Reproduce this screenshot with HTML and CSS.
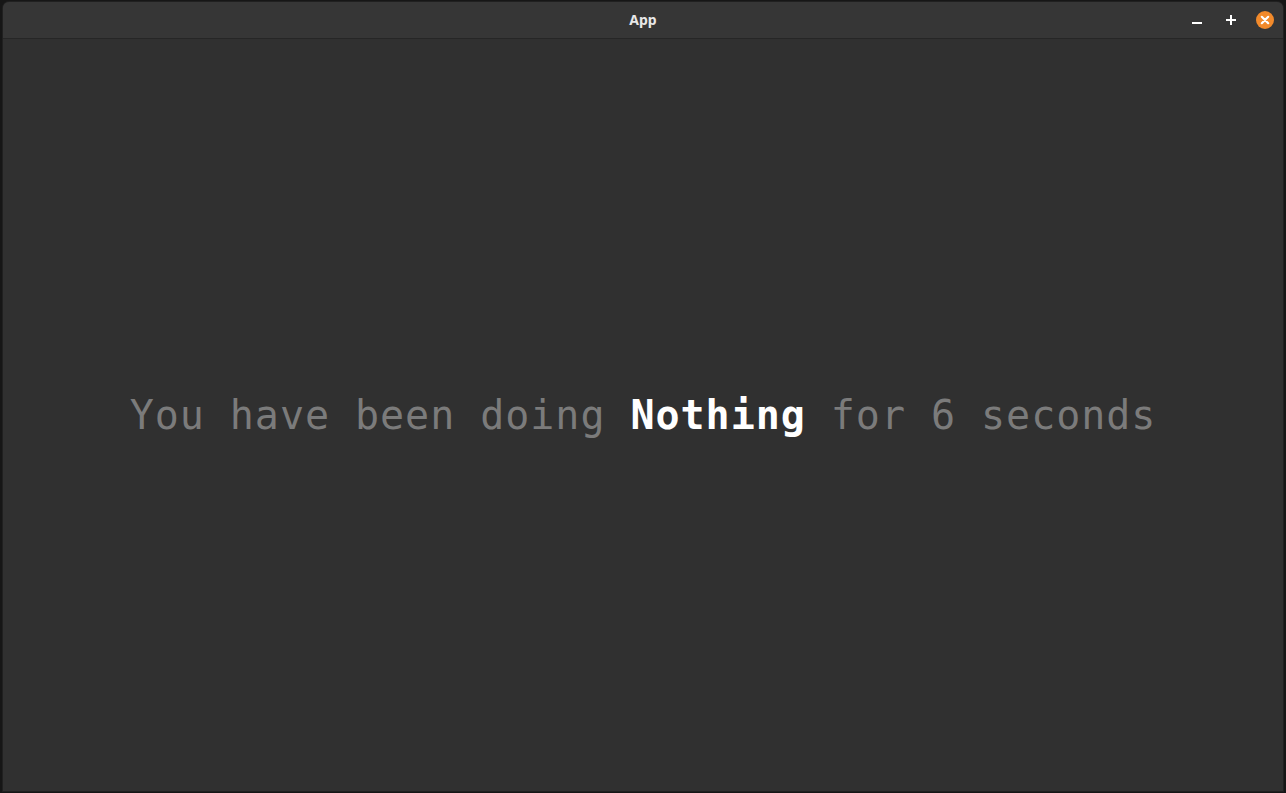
FILE: index.html
```html
<!DOCTYPE html>
<html>
<head>
<meta charset="utf-8">
<title>App</title>
<link rel="stylesheet" href="styles.css">
</head>
<body>
<div class="desktop">
  <div class="window">
    <header class="titlebar">
      <div class="title">App</div>
      <div class="controls">
        <span class="btn">
          <svg width="12" height="12" viewBox="0 0 12 12"><rect x="1" y="8" width="10" height="2" fill="#ffffff"/></svg>
        </span>
        <span class="btn">
          <svg width="12" height="12" viewBox="0 0 12 12"><rect x="1" y="5" width="10" height="2" fill="#ffffff"/><rect x="5" y="1" width="2" height="10" fill="#ffffff"/></svg>
        </span>
        <span class="btn close">
          <svg width="18" height="18" viewBox="0 0 18 18"><circle cx="9" cy="9" r="9" fill="#f28a2b"/><path d="M5.8 5.8 L12.2 12.2 M12.2 5.8 L5.8 12.2" stroke="#ffffff" stroke-width="2.2" stroke-linecap="round"/></svg>
        </span>
      </div>
    </header>
    <main class="content">
      <p class="message">You have been doing <b class="activity">Nothing</b> for 6 seconds</p>
    </main>
  </div>
</div>
</body>
</html>
```

FILE: styles.css
```css
html, body {
  margin: 0;
  padding: 0;
  background: #161616;
}
.desktop {
  width: 1286px;
  height: 793px;
  padding: 2px 3px 2px 3px;
  box-sizing: border-box;
  display: flex;
}
.window {
  flex: 1;
  display: flex;
  flex-direction: column;
  background: #303030;
  border-radius: 6px 6px 0 0;
  overflow: hidden;
  box-shadow: 0 0 0 1px #202020;
}
.titlebar {
  height: 36px;
  flex: 0 0 36px;
  background: #363636;
  border-bottom: 1px solid #262626;
  position: relative;
  display: flex;
  align-items: center;
  justify-content: flex-end;
}
.title {
  position: absolute;
  left: 0;
  right: 0;
  top: 0;
  height: 36px;
  line-height: 36px;
  text-align: center;
  font-family: "Noto Sans", "DejaVu Sans", sans-serif;
  font-weight: bold;
  font-size: 14px;
  color: #e8e8e8;
}
.controls {
  position: relative;
  display: flex;
  align-items: center;
  gap: 16px;
  padding-right: 9px;
}
.btn {
  width: 18px;
  height: 18px;
  display: flex;
  align-items: center;
  justify-content: center;
}
.btn svg { display: block; }
.content {
  flex: 1;
  display: flex;
  align-items: center;
  justify-content: center;
}
.message {
  margin: 0;
  font-family: "DejaVu Sans Mono", "Liberation Mono", monospace;
  font-size: 40px;
  letter-spacing: 0.96px;
  color: #7b7b7b;
  white-space: pre;
}
.activity {
  color: #ffffff;
  font-weight: bold;
}
```
